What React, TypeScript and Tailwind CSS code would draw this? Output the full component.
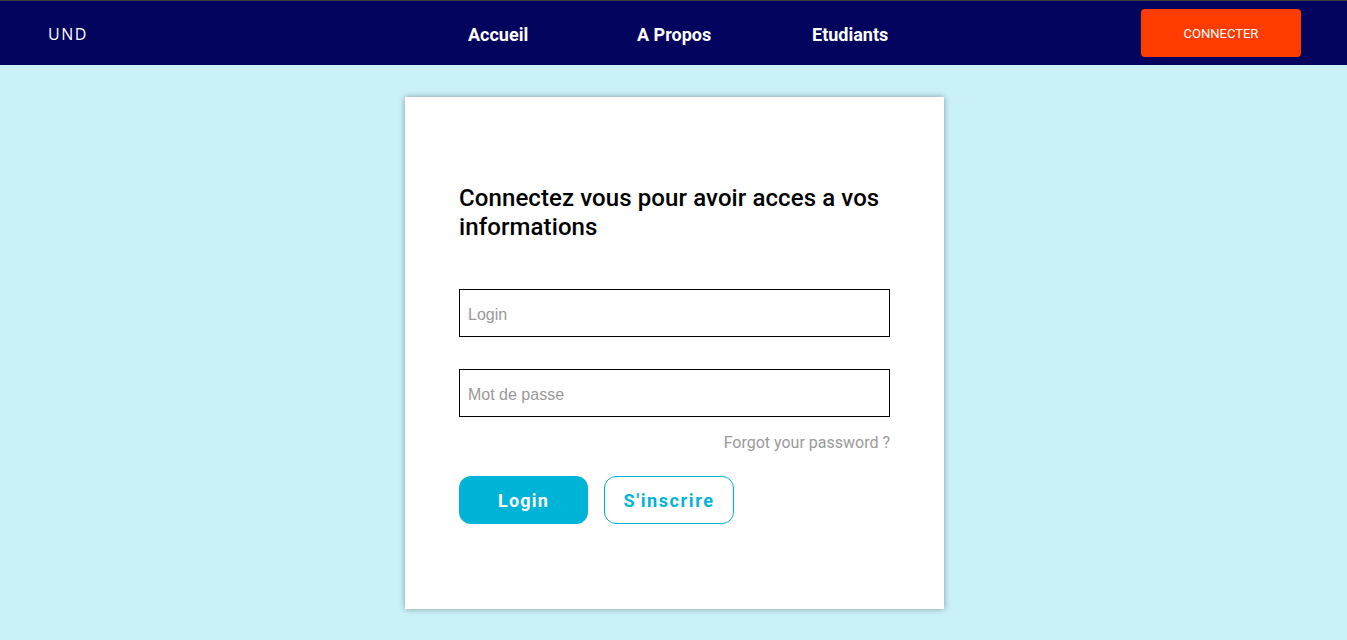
import React from "react";

export default function App() {
  return (
    <div className="min-h-[640px] w-full bg-[#caf0f8]" style={{ fontFamily: "Roboto, 'Liberation Sans', sans-serif" }}>
      <header className="h-[65px] bg-[#03045e] border-t border-[#3a3a3a] flex items-center">
        <div className="w-[420px] pl-[48px] pt-[2px] text-white text-[16px] tracking-[1.5px] font-['Open_Sans',sans-serif]">UND</div>
        <nav className="flex items-center text-white font-bold text-[18px] pt-[3px]">
          <a className="ml-[48px] w-[169px]">Accueil</a>
          <a className="w-[175px]">A Propos</a>
          <a>Etudiants</a>
        </nav>
        <div className="flex-1" />
        <button className="mr-[46px] w-[160px] h-[48px] pt-[2px] rounded-[4px] bg-[#ff3c00] text-white text-[13px]">CONNECTER</button>
      </header>
      <main className="flex justify-center pt-[32px] pb-[30px] pl-[2px]">
        <div className="w-[539px] h-[512px] bg-white shadow-[0_0_6px_rgba(0,0,0,0.35)] px-[54px] pt-[87px]">
          <h1 className="text-[24px] leading-[28px] font-medium text-black tracking-[0.1px]">
            <span className="block">Connectez vous pour avoir acces a vos</span>
            <span className="block mt-[1px]">informations</span>
          </h1>
          <form className="mt-[48px] flex flex-col w-[431px]">
            <input placeholder="Login" className="h-[48px] border border-black px-[8px] pt-[3px] text-[16px] placeholder:text-[#999] outline-none font-['Liberation_Sans',sans-serif]" />
            <input placeholder="Mot de passe" type="password" className="mt-[32px] h-[48px] border border-black px-[8px] pt-[3px] text-[16px] placeholder:text-[#999] outline-none font-['Liberation_Sans',sans-serif]" />
            <div className="mt-[16px] text-right text-[16px] text-[#9a9a9a] leading-[19px]">Forgot your password ?</div>
            <div className="mt-[24px] flex gap-[16px]">
              <button type="button" className="w-[129px] h-[48px] rounded-[12px] bg-[#00b4d8] text-white text-[18px] font-bold tracking-[1.2px]">Login</button>
              <button type="button" className="w-[130px] h-[48px] rounded-[12px] border border-[#00b4d8] text-[#00b4d8] text-[18px] font-bold tracking-[1.6px]">S'inscrire</button>
            </div>
          </form>
        </div>
      </main>
    </div>
  );
}
